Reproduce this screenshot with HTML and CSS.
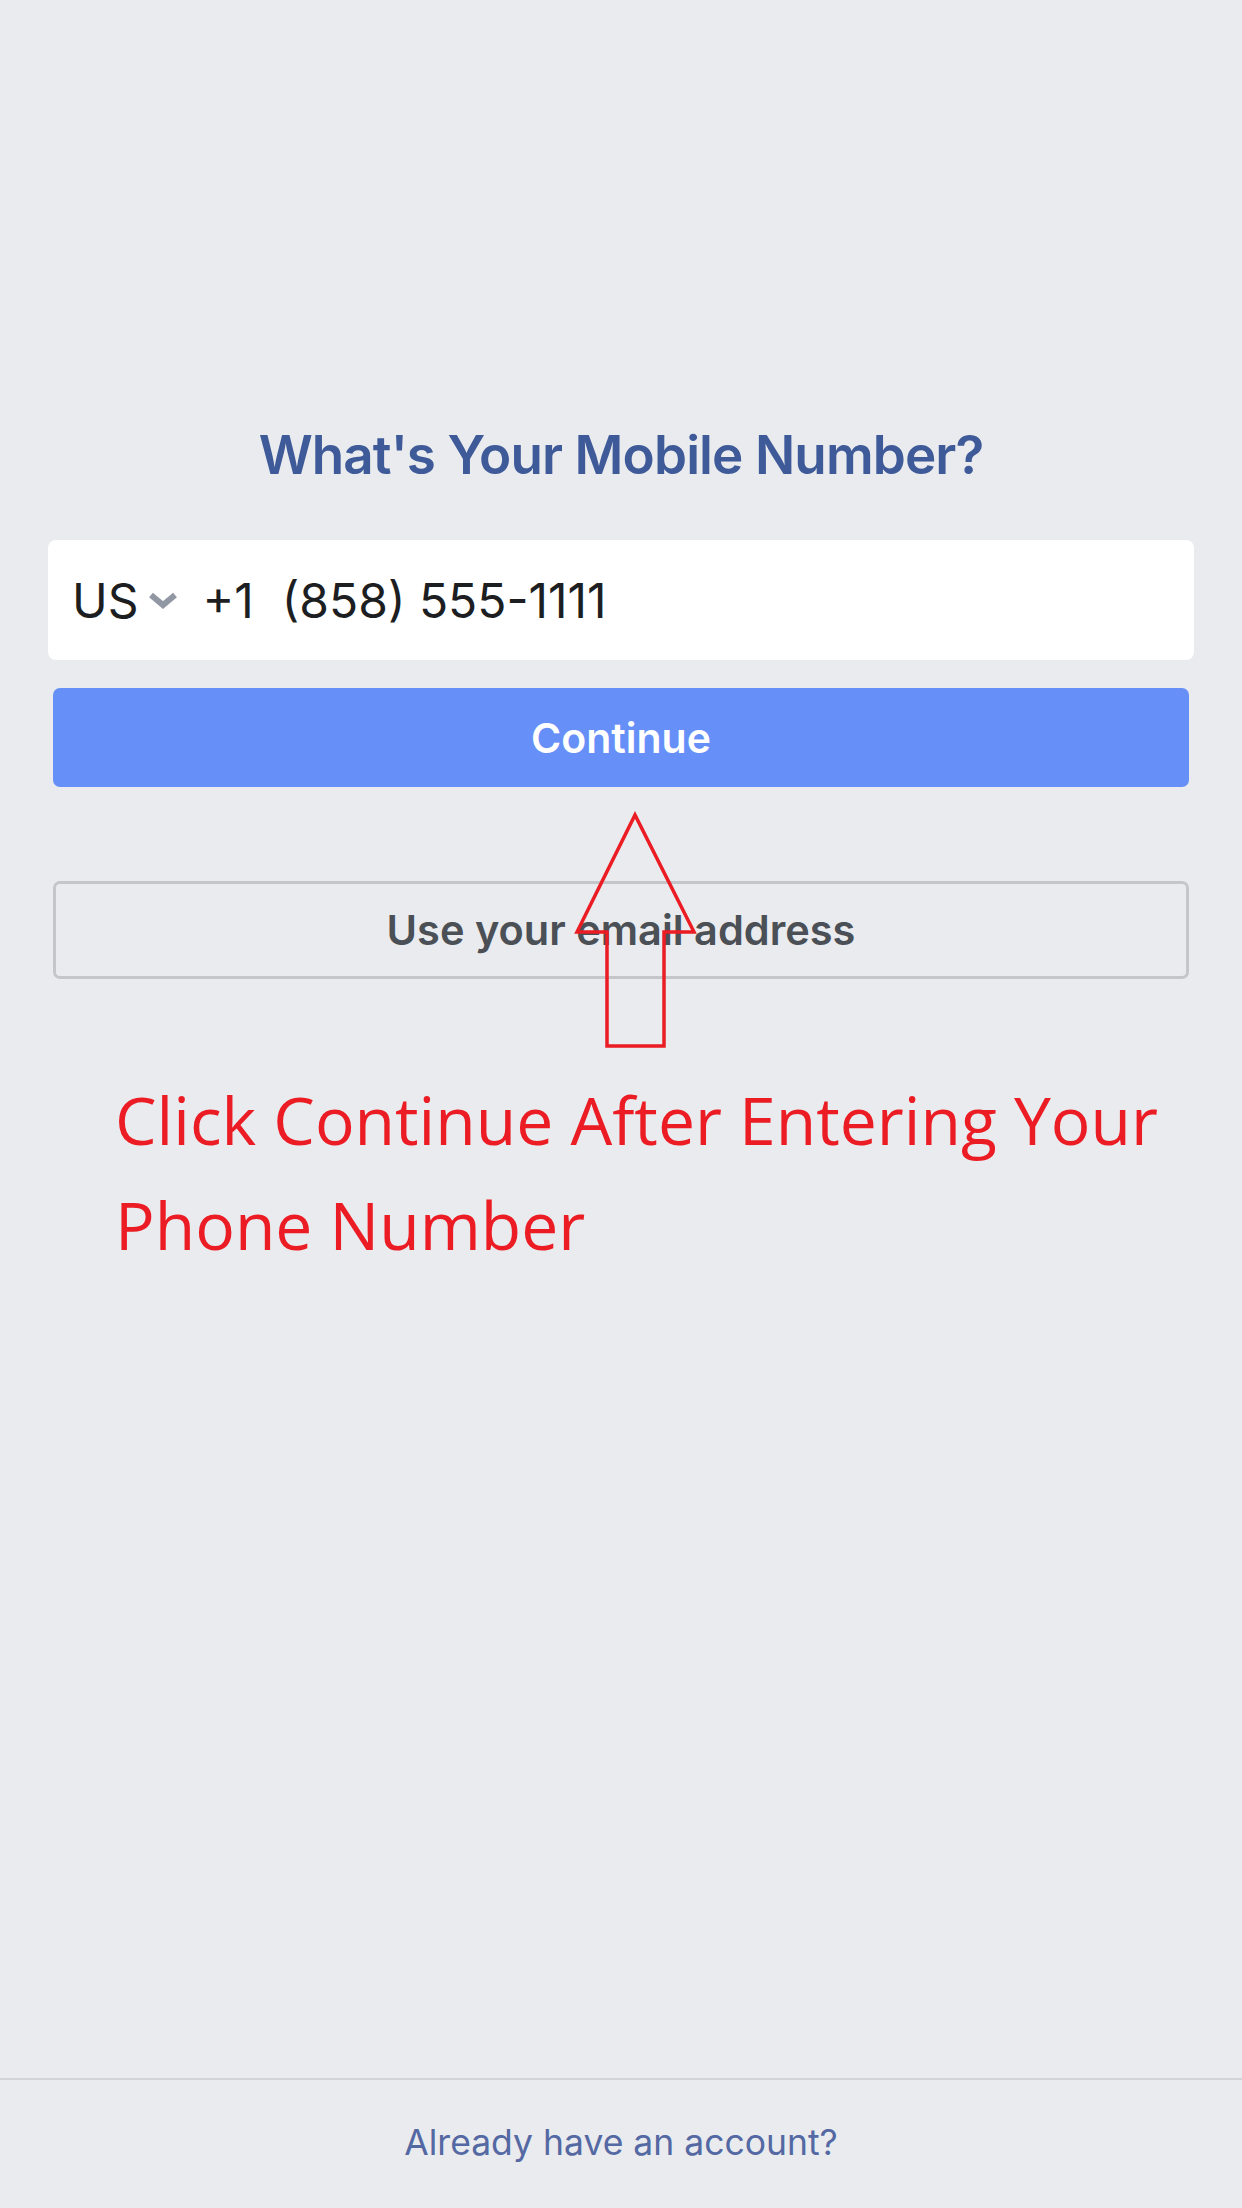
FILE: index.html
```html
<!DOCTYPE html>
<html lang="en">
<head>
<meta charset="utf-8">
<title>What's Your Mobile Number?</title>
<link rel="stylesheet" href="styles.css">
</head>
<body>
<div class="page">
  <main class="main">
    <h1 class="title">What's Your Mobile Number?</h1>
    <div class="phone">
      <span class="country">US</span>
      <svg class="chevron" viewBox="0 0 28 20" width="28" height="20"><path d="M2 5 L14 15 L26 5" fill="none" stroke="#9197a3" stroke-width="6" stroke-linejoin="miter"/></svg>
      <span class="code">+1</span>
      <span class="number">(858) 555-1111</span>
    </div>
    <button class="btn-continue">Continue</button>
    <button class="btn-email">Use your email address</button>
    <p class="note">Click Continue After Entering Your Phone Number</p>
    <svg class="arrow" viewBox="0 0 1242 2208" width="1242" height="2208">
      <polygon points="577,932 635,815 694,932 664,932 664,1046 607,1046 607,932" fill="none" stroke="#ec1c24" stroke-width="3.5"/>
    </svg>
  </main>
  <footer class="footer">
    <a class="login">Already have an account?</a>
  </footer>
</div>
</body>
</html>
```
FILE: styles.css
```css
html, body {
  margin: 0;
  padding: 0;
}
body {
  background: #e9ebee;
  font-family: Inter, Roboto, "Noto Sans", sans-serif;
}
.page {
  height: 2208px;
  display: flex;
  flex-direction: column;
}
.main {
  flex: 1;
  position: relative;
  display: flex;
  flex-direction: column;
  padding-top: 423px;
}
.title {
  margin: 0;
  text-align: center;
  font-size: 53px;
  line-height: 64px;
  font-weight: 600;
  color: #3f5a98;
  letter-spacing: -0.9px;
}
.phone {
  margin: 53px 48px 0;
  height: 120px;
  background: #fff;
  border-radius: 8px;
  display: flex;
  align-items: center;
  padding-left: 24px;
  font-size: 48px;
  color: #1c1e21;
}
.chevron {
  margin-left: 10px;
  margin-right: 26px;
}
.code {
  margin-right: 28px;
}
.btn-continue {
  margin: 28px 53px 0;
  height: 99px;
  border: none;
  border-radius: 7px;
  background: #6690f8;
  color: #fff;
  font-family: inherit;
  font-size: 41px;
  font-weight: 600;
  padding: 0;
}
.btn-email {
  margin: 94px 53px 0;
  height: 98px;
  border: 3px solid #c5c6ca;
  border-radius: 7px;
  background: transparent;
  color: #4b4f56;
  font-family: inherit;
  font-size: 41.5px;
  font-weight: 600;
  padding: 0;
}
.note {
  margin: 88px 60px 0 115px;
  font-family: "Open Sans", "Noto Sans", sans-serif;
  font-size: 66px;
  line-height: 105px;
  color: #ec1c24;
}
.arrow {
  position: absolute;
  left: 0;
  top: 0;
  pointer-events: none;
}
.footer {
  height: 130px;
  border-top: 2px solid #d3d4d8;
  display: flex;
  justify-content: center;
  padding-top: 41px;
  box-sizing: border-box;
}
.login {
  font-size: 35.5px;
  color: #5468a3;
}
```
